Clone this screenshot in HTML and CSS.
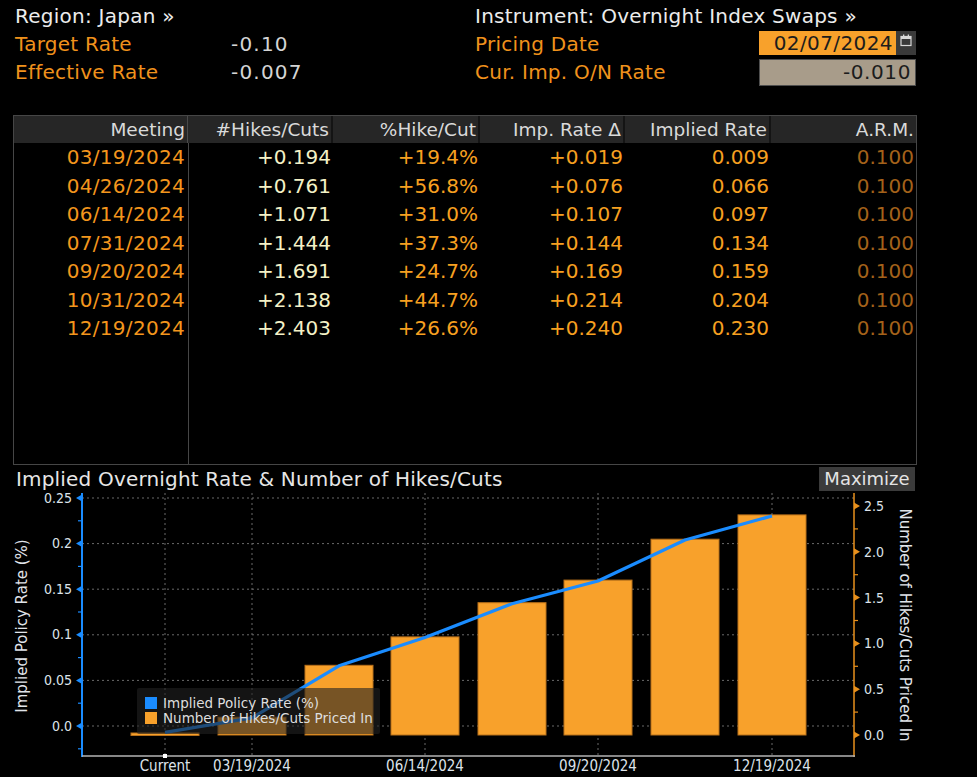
FILE: index.html
```html
<!DOCTYPE html>
<html>
<head>
<meta charset="utf-8">
<link rel="stylesheet" href="styles.css">
</head>
<body>
<div class="header">
  <div class="hdr-left">
    <div class="line title">Region: Japan »</div>
    <div class="line kv"><span class="lbl">Target Rate</span><span class="val">-0.10</span></div>
    <div class="line kv"><span class="lbl">Effective Rate</span><span class="val">-0.007</span></div>
  </div>
  <div class="hdr-right">
    <div class="line title">Instrument: Overnight Index Swaps »</div>
    <div class="line kv"><span class="lbl lbl-r">Pricing Date</span>
      <span class="datebox"><span class="date">02/07/2024</span><span class="cal"><svg width="12" height="13" viewBox="0 0 12 13"><rect x="1" y="2.5" width="10" height="9" fill="none" stroke="#d8d8d8" stroke-width="1.2"/><rect x="1" y="2.5" width="10" height="2.5" fill="#d8d8d8"/><rect x="3" y="0.5" width="1.3" height="3" fill="#d8d8d8"/><rect x="7.7" y="0.5" width="1.3" height="3" fill="#d8d8d8"/></svg></span></span>
    </div>
    <div class="line kv"><span class="lbl lbl-r">Cur. Imp. O/N Rate</span><span class="ratebox">-0.010</span></div>
  </div>
</div>

<div class="table">
  <div class="thead">
    <div class="th th-first">Meeting</div>
    <div class="th">#Hikes/Cuts</div>
    <div class="th">%Hike/Cut</div>
    <div class="th">Imp. Rate Δ</div>
    <div class="th">Implied Rate</div>
    <div class="th th-last">A.R.M.</div>
  </div>
  <div class="tbody">
    <div class="td c-date">03/19/2024</div><div class="td c-hk">+0.194</div><div class="td c-or">+19.4%</div><div class="td c-or">+0.019</div><div class="td c-or">0.009</div><div class="td c-arm">0.100</div>
    <div class="td c-date">04/26/2024</div><div class="td c-hk">+0.761</div><div class="td c-or">+56.8%</div><div class="td c-or">+0.076</div><div class="td c-or">0.066</div><div class="td c-arm">0.100</div>
    <div class="td c-date">06/14/2024</div><div class="td c-hk">+1.071</div><div class="td c-or">+31.0%</div><div class="td c-or">+0.107</div><div class="td c-or">0.097</div><div class="td c-arm">0.100</div>
    <div class="td c-date">07/31/2024</div><div class="td c-hk">+1.444</div><div class="td c-or">+37.3%</div><div class="td c-or">+0.144</div><div class="td c-or">0.134</div><div class="td c-arm">0.100</div>
    <div class="td c-date">09/20/2024</div><div class="td c-hk">+1.691</div><div class="td c-or">+24.7%</div><div class="td c-or">+0.169</div><div class="td c-or">0.159</div><div class="td c-arm">0.100</div>
    <div class="td c-date">10/31/2024</div><div class="td c-hk">+2.138</div><div class="td c-or">+44.7%</div><div class="td c-or">+0.214</div><div class="td c-or">0.204</div><div class="td c-arm">0.100</div>
    <div class="td c-date">12/19/2024</div><div class="td c-hk">+2.403</div><div class="td c-or">+26.6%</div><div class="td c-or">+0.240</div><div class="td c-or">0.230</div><div class="td c-arm">0.100</div>
  </div>
</div>

<div class="chart-head">
  <div class="chart-title">Implied Overnight Rate &amp; Number of Hikes/Cuts</div>
  <div class="btn">Maximize</div>
</div>

<svg class="chart" width="977" height="284" viewBox="0 493 977 284">
  <g class="grid">
    <line x1="82" y1="498" x2="854" y2="498"/>
    <line x1="82" y1="543.6" x2="854" y2="543.6"/>
    <line x1="82" y1="589.2" x2="854" y2="589.2"/>
    <line x1="82" y1="634.8" x2="854" y2="634.8"/>
    <line x1="82" y1="680.4" x2="854" y2="680.4"/>
    <line x1="82" y1="726" x2="854" y2="726"/>
    <line x1="165" y1="493" x2="165" y2="756"/>
    <line x1="252" y1="493" x2="252" y2="756"/>
    <line x1="425" y1="493" x2="425" y2="756"/>
    <line x1="598" y1="493" x2="598" y2="756"/>
    <line x1="772" y1="493" x2="772" y2="756"/>
  </g>
  <g class="bars">
    <rect x="131" y="733" width="68" height="2.5"/>
    <rect x="218" y="717.2" width="68" height="17.8"/>
    <rect x="305" y="665.3" width="68" height="69.7"/>
    <rect x="391" y="636.9" width="68" height="98.1"/>
    <rect x="478" y="602.7" width="68" height="132.3"/>
    <rect x="564" y="580.1" width="68" height="154.9"/>
    <rect x="651" y="539.2" width="68" height="195.8"/>
    <rect x="738" y="514.9" width="68" height="220.1"/>
  </g>
  <polyline class="rate" points="165,732.4 252,717.8 339,665.8 425,637.5 512,603.8 598,581 685,540 772,516"/>
  <rect x="137" y="688" width="243" height="46" rx="2" class="legend-bg"/>
  <rect x="145" y="697" width="12" height="12" fill="#1a8cff"/>
  <rect x="145" y="712" width="12" height="12" fill="#f8a12b"/>
  <text x="163" y="708" class="leg">Implied Policy Rate (%)</text>
  <text x="163" y="723" class="leg">Number of Hikes/Cuts Priced In</text>
  <line x1="82" y1="493" x2="82" y2="757" class="axis-l"/>
  <g class="tick-l">
    <polygon points="76,498 82,494.5 82,501.5"/>
    <polygon points="76,543.6 82,540.1 82,547.1"/>
    <polygon points="76,589.2 82,585.7 82,592.7"/>
    <polygon points="76,634.8 82,631.3 82,638.3"/>
    <polygon points="76,680.4 82,676.9 82,683.9"/>
    <polygon points="76,726 82,722.5 82,729.5"/>
  </g>
  <g class="minor-l">
    <line x1="78" y1="520.8" x2="82" y2="520.8"/>
    <line x1="78" y1="566.4" x2="82" y2="566.4"/>
    <line x1="78" y1="612" x2="82" y2="612"/>
    <line x1="78" y1="657.6" x2="82" y2="657.6"/>
    <line x1="78" y1="703.2" x2="82" y2="703.2"/>
    <line x1="78" y1="748.8" x2="82" y2="748.8"/>
  </g>
  <g class="ax" text-anchor="end">
    <text x="72" y="502.5">0.25</text>
    <text x="72" y="548.1">0.2</text>
    <text x="72" y="593.7">0.15</text>
    <text x="72" y="639.3">0.1</text>
    <text x="72" y="684.9">0.05</text>
    <text x="72" y="730.5">0.0</text>
  </g>
  <text class="axt" transform="translate(27,626) rotate(-90)" text-anchor="middle">Implied Policy Rate (%)</text>
  <line x1="854" y1="493" x2="854" y2="757" class="axis-r"/>
  <g class="tick-r">
    <polygon points="860,506 854,502.5 854,509.5"/>
    <polygon points="860,551.8 854,548.3 854,555.3"/>
    <polygon points="860,597.6 854,594.1 854,601.1"/>
    <polygon points="860,643.4 854,639.9 854,646.9"/>
    <polygon points="860,689.2 854,685.7 854,692.7"/>
    <polygon points="860,735 854,731.5 854,738.5"/>
  </g>
  <g class="minor-r">
    <line x1="854" y1="528.9" x2="858" y2="528.9"/>
    <line x1="854" y1="574.7" x2="858" y2="574.7"/>
    <line x1="854" y1="620.5" x2="858" y2="620.5"/>
    <line x1="854" y1="666.3" x2="858" y2="666.3"/>
    <line x1="854" y1="712.1" x2="858" y2="712.1"/>
  </g>
  <g class="ax">
    <text x="864" y="511">2.5</text>
    <text x="864" y="556.8">2.0</text>
    <text x="864" y="602.6">1.5</text>
    <text x="864" y="648.4">1.0</text>
    <text x="864" y="694.2">0.5</text>
    <text x="864" y="740">0.0</text>
  </g>
  <text class="axt" transform="translate(900,625) rotate(90)" text-anchor="middle">Number of Hikes/Cuts Priced In</text>
  <line x1="82" y1="756" x2="855" y2="756" class="axis-b"/>
  <rect x="163" y="754" width="4" height="4" fill="#ffffff"/>
  <g class="ax xl" text-anchor="middle">
    <text x="165" y="771">Current</text>
    <text x="252" y="771">03/19/2024</text>
    <text x="425" y="771">06/14/2024</text>
    <text x="598" y="771">09/20/2024</text>
    <text x="772" y="771">12/19/2024</text>
  </g>
</svg>
</body>
</html>
```

FILE: styles.css
```css
* { box-sizing: border-box; }

body {
  margin: 0;
  background: #000;
  width: 977px;
  height: 777px;
  overflow: hidden;
  font-family: "DejaVu Sans", sans-serif;
  color: #e6e6e6;
}

.header {
  display: flex;
  padding-top: 2px;
  height: 86px;
}

.hdr-left {
  width: 475px;
  padding-left: 15px;
}

.hdr-right {
  width: 450px;
}

.line {
  height: 28px;
  line-height: 28px;
  font-size: 20px;
  letter-spacing: 0.25px;
  white-space: nowrap;
}

.title { color: #ececec; }

.kv { display: flex; }

.lbl {
  width: 216px;
  color: #f0921c;
}

.lbl-r { width: 284px; }

.val { color: #d4d4d4; letter-spacing: 1.2px; }

.datebox {
  display: flex;
  height: 24px;
  margin-top: 1px;
}

.date {
  width: 137px;
  height: 24px;
  line-height: 24px;
  background: #f8a12b;
  color: #1c1c1c;
  text-align: right;
  padding-right: 3px;
  letter-spacing: 0.4px;
}

.cal {
  width: 20px;
  height: 24px;
  background: #3a3a3a;
  display: flex;
  justify-content: center;
  padding-top: 3px;
}

.ratebox {
  width: 157px;
  height: 27px;
  margin-top: 1px;
  line-height: 25px;
  background: #a89c8a;
  border: 1px solid #4e4e4e;
  color: #1c1c1c;
  text-align: right;
  padding-right: 4px;
  letter-spacing: 0.6px;
}

.table {
  margin: 29px 0 0 13px;
  width: 904px;
  border: 1px solid #464646;
}

.thead,
.tbody {
  display: grid;
  grid-template-columns: 174px 145px 147px 145px 146px 145px;
}

.thead {
  height: 27px;
  background: #262626;
}

.th {
  font-size: 18.5px;
  line-height: 27px;
  color: #dadada;
  text-align: right;
  padding-right: 2px;
  border-right: 2px solid #141414;
  white-space: nowrap;
}

.th-first { border-right: 1px solid #4a4a4a; }
.th-last { border-right: none; }

.tbody {
  height: 321px;
  grid-auto-rows: 28.5px;
  align-content: start;
  background: linear-gradient(to right, transparent 174px, #464646 174px, #464646 175px, transparent 175px);
}

.td {
  font-size: 20px;
  line-height: 28.5px;
  text-align: right;
  padding-right: 2px;
}

.td.c-date { padding-right: 3px; letter-spacing: 0.3px; }

.c-date { color: #f3961d; }
.c-hk { color: #f4f1c6; }
.c-or { color: #f7a020; }
.c-arm { color: #a4621a; }

.chart-head {
  display: flex;
  justify-content: space-between;
  align-items: center;
  height: 28px;
  padding: 0 62px 0 16px;
}

.chart-title {
  font-size: 20px;
  letter-spacing: 0.18px;
  color: #e6e6e6;
  white-space: nowrap;
}

.btn {
  width: 96px;
  height: 24px;
  line-height: 24px;
  background: #3b3b3b;
  color: #e4e4e4;
  font-size: 18px;
  text-align: center;
}

.chart { display: block; overflow: visible; }

.grid line {
  stroke: #6a6a6a;
  stroke-width: 1;
  stroke-dasharray: 2 3;
}

.bars rect {
  fill: #f8a12b;
  stroke: #b8701a;
  stroke-width: 1;
}

.rate {
  fill: none;
  stroke: #1a8cff;
  stroke-width: 3.2;
  stroke-linejoin: round;
}

.legend-bg { fill: rgba(34, 34, 34, 0.6); }

.leg {
  font-family: "DejaVu Sans", sans-serif;
  font-size: 13.5px;
  fill: #dedede;
}

.axis-l { stroke: #1a8cff; stroke-width: 2; }
.tick-l polygon { fill: #1a8cff; }
.minor-l line { stroke: #1a8cff; stroke-width: 1.2; }

.axis-r { stroke: #e8901c; stroke-width: 1.5; }
.tick-r polygon { fill: #e8901c; }
.minor-r line { stroke: #e8901c; stroke-width: 1.2; }

.axis-b { stroke: #b4b4b4; stroke-width: 1.5; }

.ax text {
  font-family: "DejaVu Sans Condensed", "DejaVu Sans", sans-serif;
  font-stretch: condensed;
  font-size: 14px;
  fill: #dde3ea;
}

.xl text { font-size: 15px; }

.axt {
  font-family: "DejaVu Sans", sans-serif;
  font-size: 15px;
  fill: #e0e4ea;
}
```
